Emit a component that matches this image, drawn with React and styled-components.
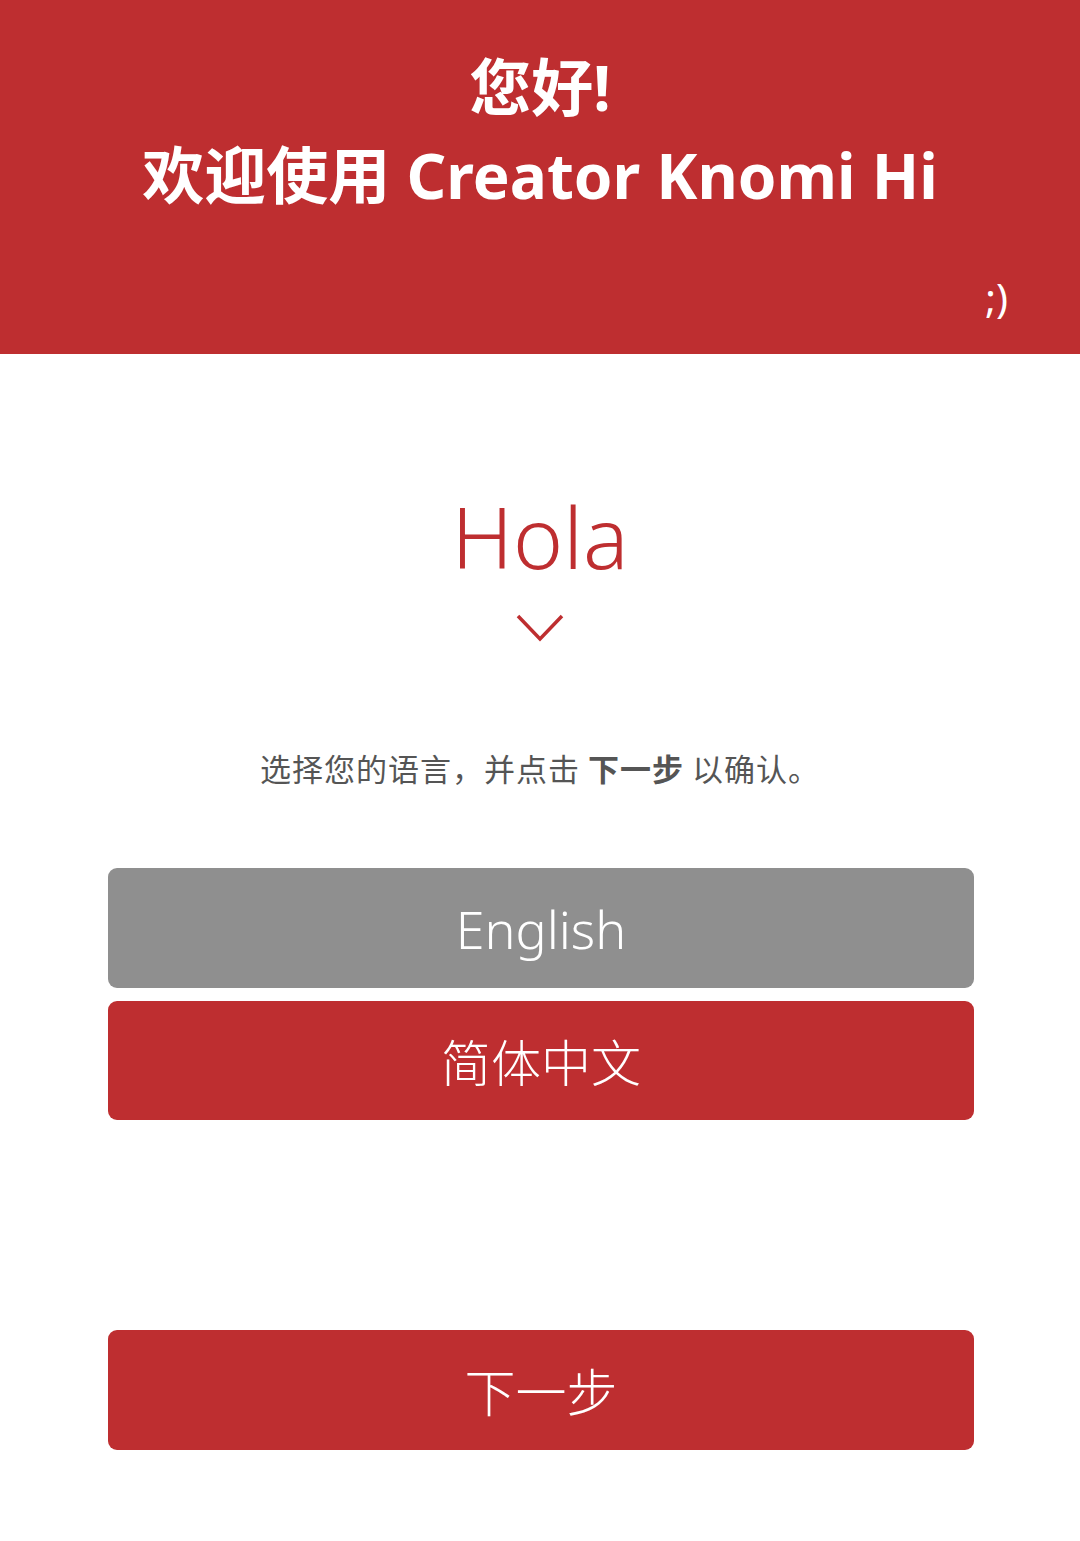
import React from 'react';
import styled, { createGlobalStyle } from 'styled-components';

const GlobalStyle = createGlobalStyle`
  html, body {
    margin: 0;
    padding: 0;
    background: #ffffff;
  }
  body {
    font-family: 'Noto Sans', 'Noto Sans CJK SC', sans-serif;
  }
`;

const Page = styled.div`
  width: 1080px;
  min-height: 1541px;
  display: flex;
  flex-direction: column;
  background: #ffffff;
`;

const Header = styled.header`
  height: 354px;
  box-sizing: border-box;
  background: #be2e30;
  color: #ffffff;
  display: flex;
  flex-direction: column;
  align-items: center;
  padding-top: 43px;
  position: relative;

  h1 {
    margin: 0;
    font-family: 'Noto Sans', 'Noto Sans CJK SC', sans-serif;
    font-weight: 700;
    font-size: 62px;
    line-height: 88px;
    text-align: center;
  }
`;

const Wink = styled.span`
  position: absolute;
  right: 72px;
  top: 272px;
  font-size: 40px;
  line-height: 52px;
  font-family: 'Noto Sans', sans-serif;
`;

const Greeting = styled.div`
  display: flex;
  flex-direction: column;
  align-items: center;
  margin-top: 134px;
  color: #be2e30;

  span {
    font-family: 'Noto Sans', sans-serif;
    font-weight: 300;
    font-size: 85px;
    line-height: 96px;
  }

  svg {
    margin-top: 30px;
  }
`;

const Hint = styled.p`
  margin: 106px 0 0;
  text-align: center;
  font-size: 31px;
  line-height: 40px;
  letter-spacing: 1px;
  color: #555555;
  font-family: 'Noto Sans CJK SC', sans-serif;

  b {
    font-weight: 700;
  }
`;

const Options = styled.div`
  display: flex;
  flex-direction: column;
  gap: 13px;
  margin: 80px 106px 0 108px;
`;

const Button = styled.button`
  height: ${(p) => p.$h || 119}px;
  border: none;
  border-radius: 9px;
  background: ${(p) => (p.$muted ? '#8f8f8f' : '#be2e30')};
  color: #ffffff;
  font-family: 'Noto Sans', 'Noto Sans CJK SC', sans-serif;
  font-weight: 300;
  font-size: ${(p) => p.$size || 50}px;
  display: flex;
  align-items: center;
  justify-content: center;
  padding: 0;
  width: 100%;
`;

const Footer = styled.div`
  margin: 210px 106px 0 108px;
  display: flex;
`;

export default function App() {
  return (
    <Page>
      <GlobalStyle />
      <Header>
        <h1>
          您好!
          <br />
          欢迎使用 Creator Knomi Hi
        </h1>
        <Wink>;)</Wink>
      </Header>
      <Greeting>
        <span>Hola</span>
        <svg width="48" height="28" viewBox="0 0 48 28" fill="none">
          <path d="M2 2 L24 25 L46 2" stroke="#be2e30" strokeWidth="3.5" />
        </svg>
      </Greeting>
      <Hint>
        选择您的语言，并点击 <b>下一步</b> 以确认。
      </Hint>
      <Options>
        <Button $muted $size={52} $h={120}>English</Button>
        <Button>简体中文</Button>
      </Options>
      <Footer>
        <Button $h={120} $size={51}>下一步</Button>
      </Footer>
    </Page>
  );
}
